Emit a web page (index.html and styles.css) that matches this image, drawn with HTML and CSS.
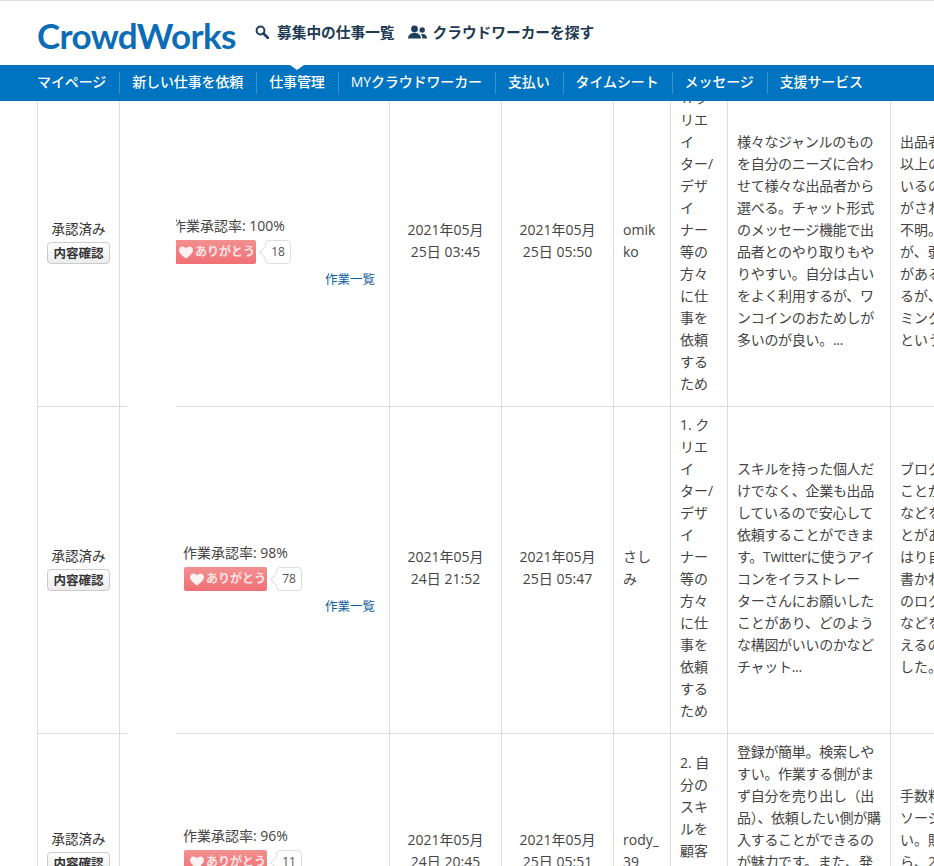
FILE: index.html
```html
<!DOCTYPE html>
<html lang="ja">
<head>
<meta charset="utf-8">
<title>CrowdWorks</title>
<link rel="stylesheet" href="styles.css">
</head>
<body>
<header class="site-header">
  <div class="brand-bar">
    <a class="logo">CrowdWorks</a>
    <a class="top-link">
      <svg class="icon-search" viewBox="0 0 14 14"><circle cx="5.5" cy="5.5" r="3.9" fill="none" stroke="#1d3f5e" stroke-width="2"/><path d="M8.5 8.5L13 13" stroke="#1d3f5e" stroke-width="2.6" stroke-linecap="round"/></svg>
      募集中の仕事一覧
    </a>
    <a class="top-link">
      <svg class="icon-people" viewBox="0 0 19 14"><circle cx="6.5" cy="4" r="3.4" fill="#1d3f5e"/><path d="M0 13.5c0-3.6 2.6-5.6 6.5-5.6s6.500 2 6.500 5.600z" fill="#1d3f5e"/><circle cx="14.200" cy="5" r="2.700" fill="#1d3f5e"/><path d="M14 8.900c2.800 0 5 1.400 5 4.600h-4.600c0-1.800-.4-3.200-1.400-4.300.3-.2.600-.3 1-.3z" fill="#1d3f5e"/></svg>
      クラウドワーカーを探す
    </a>
  </div>
  <nav class="main-nav">
    <a class="nav-item">マイページ</a>
    <a class="nav-item">新しい仕事を依頼</a>
    <a class="nav-item is-active">仕事管理</a>
    <a class="nav-item">MYクラウドワーカー</a>
    <a class="nav-item">支払い</a>
    <a class="nav-item">タイムシート</a>
    <a class="nav-item">メッセージ</a>
    <a class="nav-item is-last">支援サービス</a>
  </nav>
</header>
<main class="content">
  <div class="mask"></div>
  <table class="tasks">
    <colgroup>
      <col class="c-status"><col class="c-worker"><col class="c-date"><col class="c-date"><col class="c-user"><col class="c-reason"><col class="c-text"><col class="c-text">
    </colgroup>
    <tbody>
      <tr>
        <td class="status">承認済み<br><button class="btn">内容確認</button></td>
        <td class="worker">
          <div class="worker-box shift">
            <div class="rate">作業承認率: 100%</div>
            <div class="thanks"><span class="thanks-btn"><svg class="heart" viewBox="0 0 16 14"><path d="M8 14C3 10 0 7.500 0 4.200 0 1.800 1.800 0 4.100 0 5.700 0 7.200.9 8 2.300 8.800.9 10.300 0 11.900 0 14.200 0 16 1.800 16 4.200 16 7.500 13 10 8 14z"/></svg>ありがとう</span><span class="count">18</span></div>
          </div>
          <div class="list-link">作業一覧</div>
        </td>
        <td class="date">2021年05月<br>25日 03:45</td>
        <td class="date">2021年05月<br>25日 05:50</td>
        <td class="user">omik<br>ko</td>
        <td>1. クリエイター/デザイナー等の方々に仕事を依頼するため</td>
        <td class="desc">様々なジャンルのものを自分のニーズに合わせて様々な出品者から選べる。チャット形式のメッセージ機能で出品者とのやり取りもやりやすい。自分は占いをよく利用するが、ワンコインのおためしが多いのが良い。...</td>
        <td class="cut">出品者<br>以上の<br>いるの<br>がされ<br>不明。<br>が、弱<br>がある<br>るが、<br>ミング<br>という</td>
      </tr>
      <tr>
        <td class="status">承認済み<br><button class="btn">内容確認</button></td>
        <td class="worker">
          <div class="worker-box">
            <div class="rate">作業承認率: 98%</div>
            <div class="thanks"><span class="thanks-btn"><svg class="heart" viewBox="0 0 16 14"><path d="M8 14C3 10 0 7.500 0 4.200 0 1.800 1.800 0 4.100 0 5.700 0 7.200.9 8 2.300 8.800.9 10.300 0 11.900 0 14.200 0 16 1.800 16 4.200 16 7.500 13 10 8 14z"/></svg>ありがとう</span><span class="count">78</span></div>
          </div>
          <div class="list-link">作業一覧</div>
        </td>
        <td class="date">2021年05月<br>24日 21:52</td>
        <td class="date">2021年05月<br>25日 05:47</td>
        <td class="user">さし<br>み</td>
        <td>1. クリエイター/デザイナー等の方々に仕事を依頼するため</td>
        <td class="desc">スキルを持った個人だけでなく、企業も出品しているので安心して依頼することができます。Twitterに使うアイコンをイラストレーターさんにお願いしたことがあり、どのような構図がいいのかなどチャット...</td>
        <td class="cut">ブログ<br>ことが<br>などを<br>とがあ<br>はり自<br>書かれ<br>のログ<br>などを<br>えるの<br>した。</td>
      </tr>
      <tr>
        <td class="status">承認済み<br><button class="btn">内容確認</button></td>
        <td class="worker">
          <div class="worker-box">
            <div class="rate">作業承認率: 96%</div>
            <div class="thanks"><span class="thanks-btn"><svg class="heart" viewBox="0 0 16 14"><path d="M8 14C3 10 0 7.500 0 4.200 0 1.800 1.800 0 4.100 0 5.700 0 7.200.9 8 2.300 8.800.9 10.300 0 11.900 0 14.200 0 16 1.800 16 4.200 16 7.500 13 10 8 14z"/></svg>ありがとう</span><span class="count">11</span></div>
          </div>
          <div class="list-link">作業一覧</div>
        </td>
        <td class="date">2021年05月<br>24日 20:45</td>
        <td class="date">2021年05月<br>25日 05:51</td>
        <td class="user">rody_<br>39</td>
        <td>2. 自分のスキルを顧客に提供したいため</td>
        <td class="desc">登録が簡単。検索しやすい。作業する側がまず自分を売り出し（出品）、依頼したい側が購入することができるのが魅力です。また、発注から納品までの流れがわかりやすく、初めてでも安心して利用できます。</td>
        <td class="cut">手数料<br>ソージ<br>い。販<br>ら、2<br>ます。<br>的には</td>
      </tr>
    </tbody>
  </table>
</main>
</body>
</html>
```
FILE: styles.css
```css
* { box-sizing: border-box; }
html, body { margin: 0; height: 100%; overflow: hidden; background: #fff; }
body {
  font-family: "Open Sans", "Noto Sans CJK JP", "Liberation Sans", sans-serif;
  font-size: 14px;
  color: #444;
  display: flex;
  flex-direction: column;
}
.site-header { flex: none; position: relative; z-index: 2; background: #fff; border-top: 1px solid #ddd; }
.brand-bar { height: 64px; display: flex; align-items: center; padding-left: 37px; }
.logo {
  font-family: "Lato", sans-serif;
  font-size: 35px;
  font-weight: 700;
  line-height: 40px;
  color: #0d6cb6;
  width: 218px;
  letter-spacing: -0.6px;
  margin-top: 3px;
}
.top-link {
  display: flex;
  align-items: center;
  font-size: 14.700px;
  font-weight: 700;
  color: #1e3a52;
  margin-right: 13px;
  margin-top: -3px;
}
.icon-search { width: 14px; height: 14px; margin-right: 8px; }
.icon-people { width: 19px; height: 14px; margin-right: 6px; }
.main-nav {
  height: 36px;
  background: #0073c1;
  display: flex;
  align-items: center;
  padding-left: 25px;
}
.nav-item {
  position: relative;
  height: 22px;
  line-height: 20px;
  padding: 0 13px 0 12px;
  color: #fff;
  font-size: 14px;
  font-weight: 500;
  letter-spacing: -0.12px;
  white-space: nowrap;
  border-right: 1px solid #3a90cc;
}
.nav-item.is-last { border-right: 0; }
.nav-item.is-active::before {
  content: "";
  position: absolute;
  left: 50%;
  top: -7px;
  margin-left: -7px;
  border-style: solid;
  border-width: 5px 7px 0;
  border-color: #fff transparent transparent;
}
.content { flex: 1; min-height: 0; overflow: hidden; position: relative; }
.mask { position: absolute; left: 127px; top: 0; bottom: 0; width: 49px; background: #fff; z-index: 1; }
.tasks {
  border-collapse: collapse;
  table-layout: fixed;
  width: 1016px;
  margin: -21px 0 0 37px;
}
.c-status { width: 82px; }
.c-worker { width: 270px; }
.c-date { width: 112px; }
.c-user { width: 57px; }
.c-reason { width: 57px; }
.c-text { width: 163px; }
.tasks td {
  border: 1px solid #ddd;
  padding: 7px 9px 11px;
  line-height: 22px;
  vertical-align: middle;
  word-break: break-all;
  line-break: strict;
}
.tasks tr:first-child td { border-top: 0; }
.tasks td.status { text-align: center; font-size: 13.500px; line-height: 20px; padding: 7px 0 11px; color: #333; }
.tasks td.date { text-align: center; padding: 7px 0 11px; color: #444; }
.tasks td.user { white-space: nowrap; }
.tasks td.desc { letter-spacing: -0.3px; }
.tasks td.cut { white-space: nowrap; overflow: hidden; }
.btn {
  display: inline-block;
  width: 63px;
  height: 22px;
  padding: 0;
  font: 700 12.500px/20px "Noto Sans CJK JP", sans-serif;
  color: #333;
  background: linear-gradient(#fff, #ececec);
  border: 1px solid #ccc;
  border-radius: 4px;
  vertical-align: top;
  margin-top: 3px;
}
.tasks td.worker { padding: 20px 14px 0 64px; }
.worker-box.shift { margin-left: -11px; }
.rate { line-height: 18px; height: 23px; margin-left: -1px; white-space: nowrap; }
.thanks { display: flex; align-items: stretch; height: 24px; }
.thanks-btn {
  width: 83px;
  display: flex;
  align-items: center;
  padding-left: 6px;
  background: linear-gradient(#f29090, #f06f74);
  border-radius: 2px;
  color: #fde4e4;
  font-size: 12px;
  font-weight: 700;
  white-space: nowrap;
}
.heart { width: 14px; height: 13px; fill: #fff; margin-right: 2px; opacity: .9; }
.count {
  position: relative;
  width: 26px;
  margin-left: 9px;
  border: 1px solid #ddd;
  border-radius: 4px;
  background: #fff;
  text-align: center;
  font-size: 12px;
  line-height: 22px;
  color: #555;
}
.count::before {
  content: "";
  position: absolute;
  left: -5px;
  top: 7px;
  width: 8px;
  height: 8px;
  background: #fff;
  border-left: 1px solid #ddd;
  border-bottom: 1px solid #ddd;
  transform: rotate(45deg);
}
.list-link {
  margin-top: 7px;
  text-align: right;
  font-size: 12.500px;
  line-height: 18px;
  color: #0f5f9e;
}
```
